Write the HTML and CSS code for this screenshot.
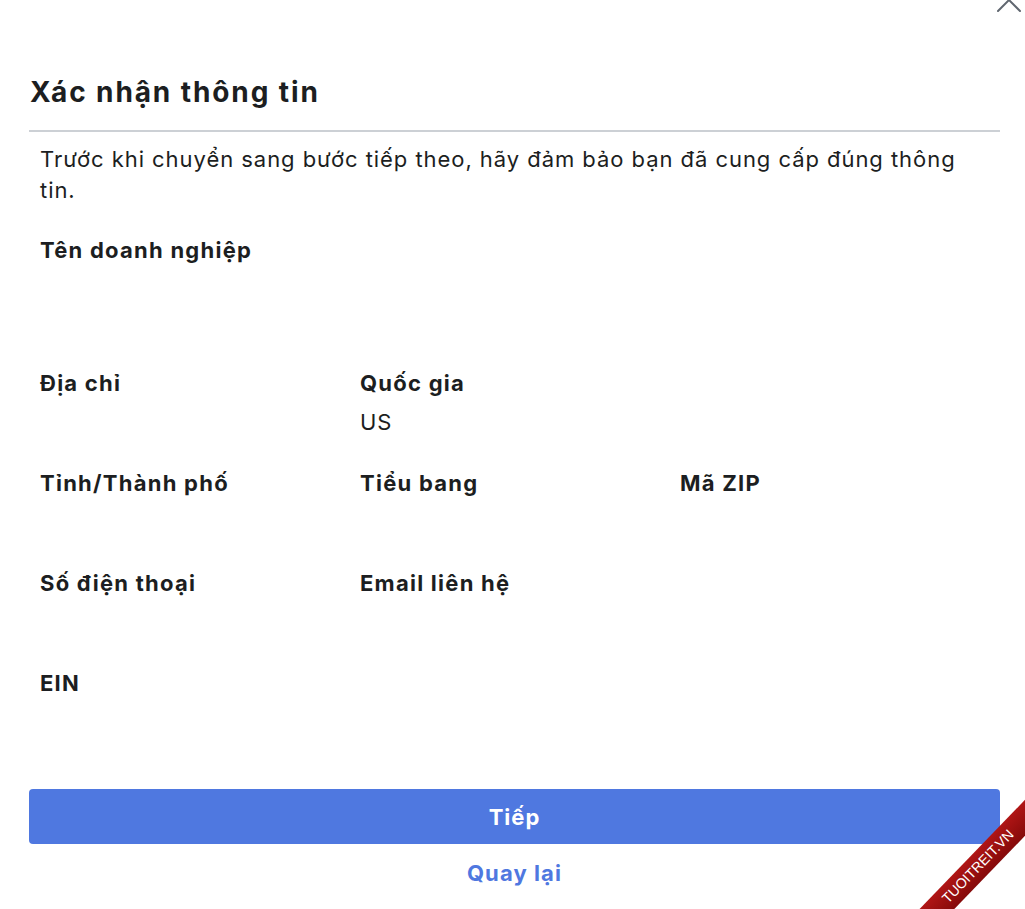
FILE: index.html
```html
<!DOCTYPE html>
<html lang="vi">
<head>
<meta charset="utf-8">
<title>Xác nhận thông tin</title>
<link rel="stylesheet" href="styles.css">
</head>
<body>
<div class="dialog">
  <button class="close" aria-label="Đóng">
    <svg width="24" height="24" viewBox="0 0 24 24"><path d="M1 1 L23 23 M23 1 L1 23" stroke="#606770" stroke-width="2" stroke-linecap="round" fill="none"/></svg>
  </button>
  <h1 class="title">Xác nhận thông tin</h1>
  <div class="body">
    <p class="intro">Trước khi chuyển sang bước tiếp theo, hãy đảm bảo bạn đã cung cấp đúng thông tin.</p>
    <div class="field top-field">
      <div class="label">Tên doanh nghiệp</div>
      <div class="value"></div>
    </div>
    <div class="grid">
      <div class="field"><div class="label">Địa chỉ</div><div class="value"></div></div>
      <div class="field"><div class="label">Quốc gia</div><div class="value">US</div></div>
      <div class="field"></div>
      <div class="field"><div class="label">Tỉnh/Thành phố</div><div class="value"></div></div>
      <div class="field"><div class="label">Tiểu bang</div><div class="value"></div></div>
      <div class="field"><div class="label">Mã ZIP</div><div class="value"></div></div>
      <div class="field"><div class="label">Số điện thoại</div><div class="value"></div></div>
      <div class="field"><div class="label">Email liên hệ</div><div class="value"></div></div>
      <div class="field"></div>
      <div class="field"><div class="label">EIN</div><div class="value"></div></div>
    </div>
  </div>
  <div class="actions">
    <button class="primary">Tiếp</button>
    <button class="link">Quay lại</button>
  </div>
</div>
<div class="ribbon">TUOITREIT.VN</div>
</body>
</html>
```

FILE: styles.css
```css
* { box-sizing: border-box; }
html, body {
  margin: 0;
  padding: 0;
  background: #ffffff;
  overflow: hidden;
}
body {
  font-family: Inter, "Noto Sans", "Liberation Sans", sans-serif;
  color: #1c1e21;
  width: 1025px;
  height: 909px;
  position: relative;
}
.dialog {
  margin-left: 29px;
  width: 971px;
  padding-top: 75px;
}
.close {
  position: absolute;
  left: 997px;
  top: -12px;
  width: 24px;
  height: 24px;
  padding: 0;
  border: 0;
  background: none;
}
.close svg { display: block; }
.title {
  margin: 0;
  padding: 0 0 21px 1px;
  font-size: 28px;
  line-height: 34px;
  font-weight: 700;
  letter-spacing: 1.9px;
  border-bottom: 2px solid #ccd0d5;
}
.body {
  padding: 0 11px;
}
.intro {
  margin: 12px 0 0;
  font-size: 22px;
  line-height: 31px;
  font-weight: 400;
  letter-spacing: 0.95px;
}
.top-field {
  margin-top: 29px;
  margin-bottom: 64px;
}
.label {
  font-size: 22px;
  line-height: 30px;
  font-weight: 700;
  letter-spacing: 1.25px;
}
.value {
  margin-top: 9px;
  min-height: 30px;
  font-size: 22px;
  line-height: 30px;
  letter-spacing: 1px;
}
.grid {
  display: grid;
  grid-template-columns: repeat(3, 320px);
  row-gap: 31px;
}
.actions {
  margin-top: 52px;
  display: flex;
  flex-direction: column;
  align-items: center;
}
.primary {
  width: 100%;
  height: 55px;
  border: 0;
  border-radius: 4px;
  background: #4f78e0;
  color: #ffffff;
  font-family: inherit;
  font-size: 22px;
  font-weight: 700;
  letter-spacing: 1px;
}
.link {
  margin-top: 14px;
  border: 0;
  background: none;
  padding: 0;
  color: #4f78e0;
  font-family: inherit;
  font-size: 22px;
  line-height: 30px;
  font-weight: 700;
  letter-spacing: 1.1px;
}
.ribbon {
  position: absolute;
  left: 893px;
  top: 854px;
  width: 170px;
  height: 25px;
  transform: rotate(-46deg);
  background: linear-gradient(#b01515, #850a0a);
  color: #ffffff;
  font-family: "Liberation Sans", Arial, sans-serif;
  font-size: 14px;
  line-height: 25px;
  text-align: center;
}
```
